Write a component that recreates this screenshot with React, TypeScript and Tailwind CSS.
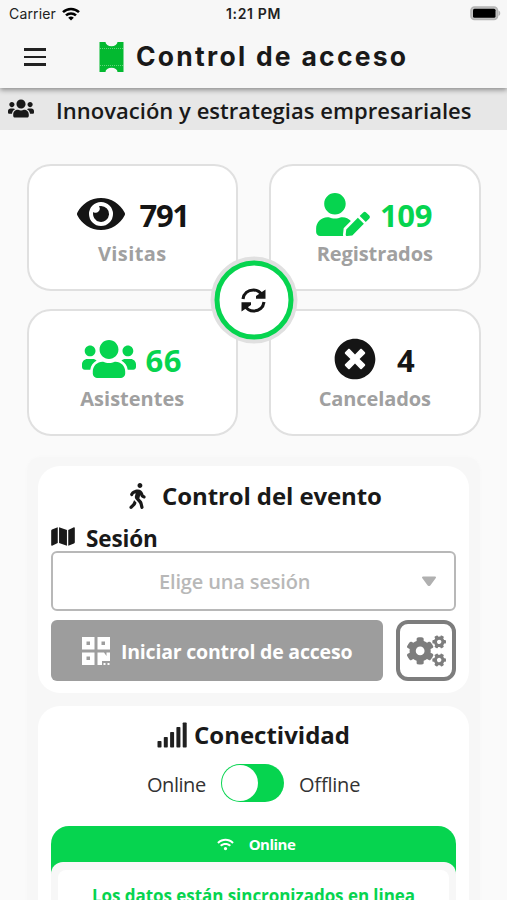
import React from 'react'
import { FaCogs, FaEye, FaMap, FaTimesCircle, FaUserEdit, FaUsers, FaWalking, FaWifi } from 'react-icons/fa'

const stats = [
  {
    icon: FaEye,
    value: "791",
    label: "Visitas",
    color: "text-[#151515]",
    size: "size-[48px]",
    row: "pl-[48px] gap-[15px]",
    tracking: "tracking-[-1.3px]",
    labelTracking: "tracking-[0.4px]"
  },
  {
    icon: FaUserEdit,
    value: "109",
    label: "Registrados",
    color: "text-[#06d44f]",
    size: "w-[54px] h-[43px]",
    row: "pl-[45px] gap-[10px]",
    tracking: "tracking-[-0.4px]",
    labelTracking: "tracking-[-0.1px]"
  },
  {
    icon: FaUsers,
    value: "66",
    label: "Asistentes",
    color: "text-[#06d44f]",
    size: "w-[54px] h-[44px]",
    row: "pl-[53px] gap-[10px]",
    tracking: "tracking-[0.4px]",
    labelTracking: "tracking-[0px]"
  },
  {
    icon: FaTimesCircle,
    value: "4",
    label: "Cancelados",
    color: "text-[#151515]",
    size: "size-[42px]",
    row: "pl-[63px] gap-[21px]",
    tracking: "tracking-[0px]",
    labelTracking: "tracking-[-0.1px]"
  },
]

const TicketIcon = () => (
  <svg className="w-[25px] h-[32px]" viewBox="0 0 25 32">
    <path d="M0.500 1H6.500a6 4.200 0 0 0 12 0h6v30h-6a6 4.200 0 0 0-12 0h-6z" fill="#03b930" />
    <path d="M1 7.500h23M1 24.500h23" stroke="#5fd57a" strokeWidth="1" strokeDasharray="1 1" />
  </svg>
)

const RefreshIcon = () => (
  <svg className="w-[26px] h-[26px]" viewBox="0 0 26 26" fill="none" stroke="#151515" strokeWidth="3.100">
    <path d="M2.500 11.500C3.300 5.800 7.300 2.500 13 2.500c3.600 0 6.500 1.700 8.500 5" />
    <path d="M23.500 14.500C22.700 20.200 18.700 23.500 13 23.500c-3.600 0-6.500-1.700-8.500-5" />
    <path d="M25 2v9.200h-9.500v-2.700z" fill="#151515" stroke="none" />
    <path d="M1 24v-9.200h9.500v2.700z" fill="#151515" stroke="none" />
  </svg>
)

const QrIcon = () => (
  <svg className="w-[28px] h-[28px]" viewBox="0 0 28 28" fill="white">
    <path fillRule="evenodd" d="M0 0h12.500v12.500H0zM4.500 4.500v3.500h3.500v-3.500z" />
    <path fillRule="evenodd" d="M15.500 0H28v12.500H15.500zM19.500 4.500v3.500h3.500v-3.500z" />
    <path fillRule="evenodd" d="M0 15.500h12.500V28H0zM4.500 19.500v3.500h3.500v-3.500z" />
    <path d="M15.500 15.500h6.500l2.500 3.500v-3.500H28v8.500h-8V28h-4.500zM21.500 26h2v2h-2zM25.500 26h2v2h-2z" />
  </svg>
)

const SignalIcon = () => (
  <svg className="w-[30px] h-[26px]" viewBox="0 0 30 26" fill="#202020">
    <rect x="0.500" y="19" width="4" height="6.500" rx="0.800" />
    <rect x="6.800" y="15" width="4" height="10.500" rx="0.800" />
    <rect x="13.100" y="10" width="4" height="15.500" rx="0.800" />
    <rect x="19.400" y="5" width="4" height="20.500" rx="0.800" />
    <rect x="25.700" y="0.500" width="4" height="25" rx="0.800" />
  </svg>
)

const StatusBar = () => (
  <div className="relative flex items-center justify-between h-[27px] pl-[9px] pr-[6px] font-['Inter',sans-serif] text-[14px] text-[#222]">
    <div className="flex items-center gap-[6px]">
      <span className="w-[47px] whitespace-nowrap tracking-[0.150px]">Carrier</span>
      <svg className="w-[18px] h-[14px]" viewBox="0 0 18 14" fill="none" stroke="#000" strokeWidth="2.500">
        <path d="M1 5.200a11.500 11.500 0 0 1 16 0M4 8.400a7.200 7.200 0 0 1 10 0" />
        <path d="M9 13.500L6.200 10.800a4 4 0 0 1 5.600 0z" fill="#000" stroke="none" />
      </svg>
    </div>
    <span className="absolute left-[226px] font-semibold whitespace-nowrap tracking-[0.650px]">1:21 PM</span>
    <svg className="w-[31px] h-[15px]" viewBox="0 0 31 15">
      <rect x="1" y="1" width="26.500" height="12.500" rx="3.500" fill="#c4c4c4" stroke="#b4b4b4" strokeWidth="1.600" />
      <rect x="3" y="2.800" width="22.500" height="9" rx="1.500" fill="#000" />
      <path d="M28.500 4.500c2.300 .8 2.300 4.700 0 5.500z" fill="#b4b4b4" />
    </svg>
  </div>
)

const StatCard = ({ stat }: { stat: typeof stats[number] }) => {
  const Icon = stat.icon
  return (
    <div className="h-[127px] bg-white border-2 border-[#e0e0e0] rounded-[24px] pt-[25px]">
      <div className={`flex items-center h-[46px] ${stat.row} ${stat.color}`}>
        <Icon className={`shrink-0 ${stat.size}`} />
        <span className={`text-[31px] leading-none font-bold pt-[3px] ${stat.tracking}`}>{stat.value}</span>
      </div>
      <p className={`text-center text-[20px] leading-[34px] font-bold text-[#a0a0a0] ${stat.labelTracking}`}>{stat.label}</p>
    </div>
  )
}

const App = () => {
  return (
    <div className="w-full h-[900px] overflow-hidden bg-[#fafafa] font-['Open_Sans',sans-serif] text-[#191919]">
      <header className="relative h-[88px] bg-[#f7f7f7] shadow-[0_2px_5px_rgba(0,0,0,0.4)]">
        <StatusBar />
        <div className="flex items-center h-[60px] pl-[24px]">
          <div className="flex flex-col gap-[5px] w-[22px]">
            <span className="h-[2.500px] bg-[#222]" />
            <span className="h-[2.500px] bg-[#222]" />
            <span className="h-[2.500px] bg-[#222]" />
          </div>
          <div className="flex items-center gap-[12px] pl-[53px]">
            <TicketIcon />
            <h1 className="font-['Inter',sans-serif] text-[26.500px] font-bold tracking-[2.250px] whitespace-nowrap">Control de acceso</h1>
          </div>
        </div>
      </header>

      <div className="flex items-center h-[42px] bg-[#e7e7e7] pl-[8px] gap-[22px]">
        <FaUsers className="w-[26px] h-[21px] mb-[2px]" />
        <h2 className="text-[22px] font-semibold whitespace-nowrap pt-[3px] tracking-[0.030px]">Innovación y estrategias empresariales</h2>
      </div>

      <div className="relative grid grid-cols-2 gap-x-[31px] gap-y-[18px] mt-[34px] mx-[26.500px]">
        {stats.map((stat) => (
          <StatCard key={stat.label} stat={stat} />
        ))}
        <button className="absolute left-1/2 top-1/2 -translate-x-1/2 -translate-y-1/2 size-[87px] rounded-full bg-[#e0e0e0] p-[4px]">
          <span className="flex items-center justify-center size-full rounded-full bg-white border-[5px] border-[#06d44f]">
            <RefreshIcon />
          </span>
        </button>
      </div>

      <main className="mt-[21px] mx-[27px] pt-[9px] px-[11px] pb-4 h-[460px] bg-[#f7f7f7] rounded-[14px] shadow-[0_0_3px_#f7f7f7]">
        <section className="h-[227px] w-[431px] bg-white rounded-[22px] px-[13px] pt-[14px]">
          <div className="flex items-center h-[32px] pl-[77px] gap-[15px]">
            <FaWalking className="w-[19px] h-[26px]" />
            <h3 className="text-[24px] font-bold whitespace-nowrap tracking-[-0.100px]">Control del evento</h3>
          </div>
          <div className="flex items-center h-[39px] gap-[11px] pt-[13px]">
            <FaMap className="w-[24px] h-[21px] mb-[4px]" />
            <h4 className="text-[22.500px] font-bold tracking-[-0.150px] pt-[2px]">Sesión</h4>
          </div>
          <div className="flex items-center justify-between h-[60px] w-[405px] border-2 border-[#b8b8b8] rounded-[6px] pl-[106px] pr-[17px]">
            <span className="text-[20px] font-semibold text-[#b8b8b8] whitespace-nowrap pt-[2px] tracking-[-0.150px]">Elige una sesión</span>
            <svg className="w-[16px] h-[11px]" viewBox="0 0 16 11">
              <path d="M2 1.500h12L8.500 9h-1z" fill="#b0b0b0" stroke="#b0b0b0" strokeWidth="2" strokeLinejoin="round" />
            </svg>
          </div>
          <div className="flex gap-[13px] mt-[9px] w-[405px]">
            <button className="flex items-center w-[332px] h-[61px] bg-[#9d9d9d] rounded-[6px] pl-[31px] gap-[11px] text-white">
              <QrIcon />
              <span className="text-[19.500px] font-bold whitespace-nowrap pt-[3px] tracking-[-0.200px]">Iniciar control de acceso</span>
            </button>
            <button className="flex items-center justify-center w-[60px] h-[61px] bg-white border-[4.500px] border-[#7d7d7d] rounded-[12px] text-[#7d7d7d]">
              <FaCogs className="w-[39px] h-[32px] shrink-0" />
            </button>
          </div>
        </section>

        <section className="mt-[13px] w-[431px] h-[260px] bg-white rounded-[22px] px-[13px] pt-[13px]">
          <div className="flex items-center h-[32px] pl-[106px] gap-[7px]">
            <SignalIcon />
            <h3 className="text-[24px] font-bold whitespace-nowrap">Conectividad</h3>
          </div>
          <div className="flex items-center h-[38px] mt-[13px] pl-[96px] text-[20px] text-[#333]">
            <span className="w-[74px] pt-[3px] tracking-[-0.450px]">Online</span>
            <div className="w-[63px] h-[38px] shrink-0 rounded-full bg-[#06d44f] p-[1px]">
              <div className="size-[36px] rounded-full bg-white" />
            </div>
            <span className="pl-[15px] pt-[3px] tracking-[-0.200px]">Offline</span>
          </div>
          <div className="w-[405px] mt-[24px] rounded-t-[18px] bg-[#06d44f]">
            <div className="flex items-center justify-center gap-[15px] h-[36px] pl-[5px] text-white">
              <FaWifi className="w-[17px] h-[13px]" />
              <span className="text-[15px] font-bold tracking-[-0.500px]">Online</span>
            </div>
            <div className="h-[80px] bg-[#f7f7f7] rounded-t-[12px] pt-[8px] px-[7px]">
              <div className="h-[72px] bg-white rounded-t-[8px] pt-[13px]">
                <p className="text-center text-[17px] leading-[26px] font-bold text-[#06d44f] whitespace-nowrap tracking-[-0.050px]">Los datos están sincronizados en linea</p>
              </div>
            </div>
          </div>
        </section>
      </main>
    </div>
  )
}

export default App
